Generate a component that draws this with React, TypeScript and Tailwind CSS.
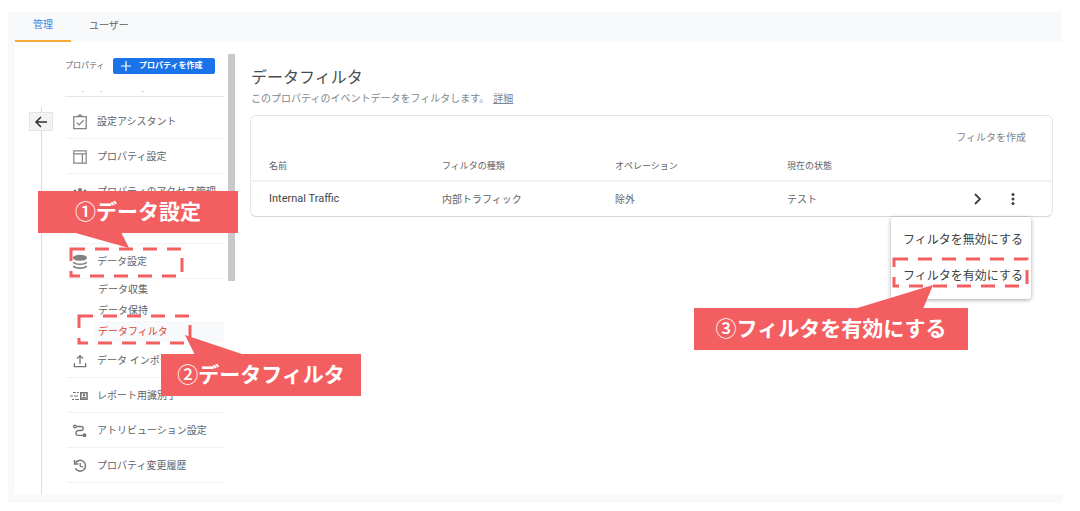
import type { ReactNode } from "react";

const items: { id: string; label?: string; icon?: ReactNode }[] = [
  {
    id: "assistant",
    label: "設定アシスタント",
    icon: (
      <svg viewBox="0 0 16 16" className="size-4" fill="none" stroke="#858585" strokeWidth="1.3">
        <path d="M1.8 2.6h12.4v12H1.800z" />
        <path d="M5.600 2.400 8 .8l2.400 1.600" />
        <path d="m4.800 8.600 2.300 2.300 4.500-4.600" />
      </svg>
    ),
  },
  {
    id: "property",
    label: "プロパティ設定",
    icon: (
      <svg viewBox="0 0 16 16" className="size-4" fill="none" stroke="#858585" strokeWidth="1.2">
        <path d="M1.800 1.800h12.400v12.400H1.800z" />
        <path d="M1.800 4.800h12.400M10.400 4.800v9.400" />
      </svg>
    ),
  },
  {
    id: "access",
    label: "プロパティのアクセス管理",
    icon: (
      <svg viewBox="0 0 16 16" className="size-4" fill="#757575">
        <circle cx="3" cy="7" r="1.6" />
        <circle cx="8" cy="6" r="2" />
        <circle cx="13" cy="7" r="1.6" />
        <path d="M0 12c0-3 6-3 6 0zM4.5 12c0-4 7-4 7 0zM10 12c0-3 6-3 6 0z" />
      </svg>
    ),
  },
  { id: "spacer" },
  {
    id: "data",
    label: "データ設定",
    icon: (
      <svg viewBox="0 0 16 16" className="size-4" fill="none" stroke="#808080" strokeWidth="1.7">
        <ellipse cx="8" cy="3.800" rx="6.200" ry="2.200" fill="#808080" />
        <path d="M1.400 8c1.400 3 11.800 3 13.200 0M1.400 11.800c1.400 3 11.800 3 13.200 0" />
      </svg>
    ),
  },
];

const subItems = [
  { label: "データ収集", active: false },
  { label: "データ保持", active: false },
  { label: "データフィルタ", active: true },
];

const lowerItems: { id: string; label: string; icon: ReactNode }[] = [
  {
    id: "import",
    label: "データ インポート",
    icon: (
      <svg viewBox="0 0 16 16" className="size-4" fill="none" stroke="#757575" strokeWidth="1.3">
        <path d="M8 11V3M5 5.600 8 2.600l3 3M2.400 10v3.600h11.200V10" />
      </svg>
    ),
  },
  {
    id: "identity",
    label: "レポート用識別子",
    icon: (
      <svg viewBox="0 0 18 10" className="h-[10px] w-[18px]" fill="none" stroke="#757575">
        <path d="M3 1.500h3M7 1.500h2M0 5h3M4 5h4M2 8.500h2M5 8.500h4" strokeWidth="1.200" />
        <path d="M10.800 1.800h6.200v6.400h-6.200z" strokeWidth="1.600" />
        <circle cx="13.900" cy="4" r="1.200" fill="#757575" stroke="none" />
        <path d="M11.800 7.500c0-2.400 4.200-2.400 4.200 0z" fill="#757575" stroke="none" />
      </svg>
    ),
  },
  {
    id: "attribution",
    label: "アトリビューション設定",
    icon: (
      <svg viewBox="0 0 16 16" className="size-4" fill="none" stroke="#757575" strokeWidth="1.300">
        <circle cx="3" cy="3.500" r="1.300" />
        <path d="M4.500 3.500h4.500c3 0 3 4 0 4H6.500c-3.400 0-3.400 4.800 0 4.800H11" />
        <circle cx="12.500" cy="12.300" r="1.300" fill="#757575" />
      </svg>
    ),
  },
  {
    id: "history",
    label: "プロパティ変更履歴",
    icon: (
      <svg viewBox="0 0 16 16" className="size-4" fill="none" stroke="#757575" strokeWidth="1.500">
        <path d="M3.600 4.800A5.400 5.400 0 1 1 3.400 10.400" />
        <path d="M2.600 2v4h4" />
        <path d="M8.200 5v3.400l3 .8" strokeWidth="1.200" />
      </svg>
    ),
  },
];

function NavRow({ label, icon }: { label?: string; icon?: ReactNode }) {
  return (
    <li className="h-[35px] border-b border-[#f1f2f3] pt-px">
      {label && (
        <a href="#" className="flex h-full items-center gap-[9px] text-[10px] whitespace-nowrap text-[#5f6368]">
          <span className="flex w-[21px] shrink-0 items-center justify-end">{icon}</span>
          {label}
        </a>
      )}
    </li>
  );
}

function DashedFrame({ className }: { className: string }) {
  return (
    <svg className={`pointer-events-none absolute overflow-visible ${className}`} aria-hidden="true">
      <rect width="100%" height="100%" fill="none" stroke="#f35f61" strokeWidth="3" strokeDasharray="14 10" />
    </svg>
  );
}

function Callout({
  step,
  children,
  className,
  tail,
}: {
  step: string;
  children: ReactNode;
  className: string;
  tail: ReactNode;
}) {
  return (
    <div
      className={`absolute flex h-[42px] items-center justify-center bg-[#f35f61] text-[21px] font-bold whitespace-nowrap text-white ${className}`}
    >
      {tail}
      <p className="relative">
        <span className="font-medium">{step}</span>
        {children}
      </p>
    </div>
  );
}

export default function App() {
  return (
    <div className="relative bg-white pt-3 pr-[18px] pb-2 pl-2 font-['Liberation_Sans','Noto_Sans_CJK_JP',sans-serif] text-[#5f6368]">
      <div className="bg-[#f7f9fb] pb-[9px] pl-[7px]">
        <nav className="flex h-[30px] text-[10px]">
          <a
            href="#"
            className="flex w-14 items-center justify-center border-b-2 border-[#f9ab3a] pb-1 text-[#4285e0]"
          >
            管理
          </a>
          <a href="#" className="flex items-center pb-1 pl-[18px] text-[#5f6368]">
            ユーザー
          </a>
        </nav>

        <div className="flex h-[452px] bg-white">
          <div className="flex w-[50px] flex-col pl-[14px]">
            <div className="relative mt-[65px] flex flex-1 flex-col">
              <span className="absolute top-0 bottom-0 left-3 w-px bg-[#dcdcdc]" />
              <button
                aria-label="戻る"
                className="relative mt-[5px] flex h-[19px] w-6 items-center justify-center border border-[#e4e4e4] bg-[#f3f3f3]"
              >
                <svg viewBox="0 0 14 12" className="h-3 w-[14px]" fill="none" stroke="#333" strokeWidth="1.500">
                  <path d="M13 6H2M7 1 2 6l5 5" />
                </svg>
              </button>
            </div>
          </div>

          <aside className="w-[159px]">
            <div className="flex h-[55px] flex-col justify-between border-b border-[#e3e4e5]">
              <div className="flex items-center gap-2 pt-4">
                <span className="w-10 text-[8px] leading-4 whitespace-nowrap">プロパティ</span>
                <button className="flex h-4 w-[102px] items-center gap-2 rounded-[2px] bg-[#1a73e8] pl-2 text-[8px] font-bold whitespace-nowrap text-white">
                  <svg viewBox="0 0 10 10" className="size-[10px] shrink-0" stroke="#fff" strokeWidth="1.200">
                    <path d="M5 0v10M0 5h10" />
                  </svg>
                  プロパティを作成
                </button>
              </div>
              <svg viewBox="0 0 159 3" className="mb-[3px] h-[3px] w-full" fill="#b5b5b5" aria-hidden="true">
                <circle cx="18" cy="1.500" r=".7" />
                <circle cx="36" cy="1.500" r=".7" />
                <circle cx="78" cy="1.500" r=".7" />
              </svg>
            </div>
            <ul className="pt-[7px] pl-[2px]">
              {items.map(({ id, label, icon }) => (
                <NavRow key={id} label={label} icon={icon} />
              ))}
            </ul>
            <ul className="pl-[29px] text-[10px]">
              {subItems.map((item) => (
                <li key={item.label}>
                  <a
                    href="#"
                    className={
                      item.active
                        ? "flex h-[21px] items-center bg-[#f8f9fa] pl-1 text-[#d8453e]"
                        : "flex h-[21px] items-center pl-1"
                    }
                  >
                    {item.label}
                  </a>
                </li>
              ))}
            </ul>
            <ul className="pt-px pl-[2px]">
              {lowerItems.map(({ id, label, icon }) => (
                <NavRow key={id} label={label} icon={icon} />
              ))}
            </ul>
          </aside>
          <div className="mt-3 ml-1 h-[227px] w-[7px] shrink-0 bg-[#c8c8c8]" />

          <main className="min-w-0 flex-1 pt-[26px] pr-[9px] pl-[15px]">
            <h1 className="pl-px text-base leading-5 text-[#4a4d51]">データフィルタ</h1>
            <p className="mt-[3px] pl-px text-[10px] leading-4 text-[#80868b]">
              このプロパティのイベントデータをフィルタします。
              <a href="#" className="ml-1 underline">
                詳細
              </a>
            </p>
            <section className="mt-2 rounded-md border border-[#e4e6e8] border-b-[#d5d8db]">
              <div className="flex h-[34px] items-end justify-end pr-[26px] pb-1">
                <button className="text-[10px] leading-4 text-[#80868b]">フィルタを作成</button>
              </div>
              <table className="w-full table-fixed text-left text-[10px]">
                <thead>
                  <tr className="h-[31px] border-b-2 border-[#f0f1f2] text-[9px]">
                    <th className="w-[191px] pt-[3px] pl-[18px] font-normal">名前</th>
                    <th className="w-[173px] pt-[3px] font-normal">フィルタの種類</th>
                    <th className="w-[172px] pt-[3px] font-normal">オペレーション</th>
                    <th className="pt-[3px] font-normal">現在の状態</th>
                    <th className="w-24" aria-label="操作" />
                  </tr>
                </thead>
                <tbody>
                  <tr className="h-[35px]">
                    <td className="pl-[18px] font-['Roboto'] text-[11px] text-[#44474a]">Internal Traffic</td>
                    <td>内部トラフィック</td>
                    <td>除外</td>
                    <td>テスト</td>
                    <td>
                      <div className="flex items-center gap-[25px] pl-[17px]">
                        <button aria-label="詳細を表示">
                          <svg viewBox="0 0 10 12" className="h-3 w-[10px]" fill="none" stroke="#3c4043" strokeWidth="1.800">
                            <path d="m2 1 5 5-5 5" />
                          </svg>
                        </button>
                        <button aria-label="その他">
                          <svg viewBox="0 0 10 12" className="h-3 w-[10px]" fill="#3c4043">
                            <circle cx="5" cy="1.500" r="1.500" />
                            <circle cx="5" cy="6" r="1.500" />
                            <circle cx="5" cy="10.500" r="1.500" />
                          </svg>
                        </button>
                      </div>
                    </td>
                  </tr>
                </tbody>
              </table>
            </section>
          </main>
        </div>
      </div>

      <div className="absolute top-[217px] right-[49px] flex w-[140px] flex-col rounded-[3px] bg-white pt-[5px] pb-[5px] text-xs text-[#3c4043] shadow-[0_1px_4px_rgba(0,0,0,0.35)]">
        <button className="h-9 pl-3 text-left whitespace-nowrap">フィルタを無効にする</button>
        <button className="h-9 pl-3 text-left whitespace-nowrap">フィルタを有効にする</button>
      </div>

      <DashedFrame className="top-[249px] left-[71px] h-[27px] w-[111px]" />
      <DashedFrame className="top-[316px] left-[79px] h-[27px] w-[111px]" />
      <DashedFrame className="top-[259px] right-[53px] h-[27px] w-[133px]" />

      <Callout
        step="①"
        className="top-[191px] left-[38px] w-[200px]"
        tail={
          <svg className="absolute top-[41px] left-[34px] h-4 w-[58px]" viewBox="0 0 58 16" fill="#f35f61">
            <path d="M0 0h49l8 16z" />
          </svg>
        }
      >
        データ設定
      </Callout>
      <Callout
        step="②"
        className="top-[354px] left-[161px] w-[200px]"
        tail={
          <svg className="absolute -top-[19px] left-[24px] h-5 w-[60px]" viewBox="0 0 60 20" fill="#f35f61">
            <path d="M0 0 60 20H10z" />
          </svg>
        }
      >
        データフィルタ
      </Callout>
      <Callout
        step="③"
        className="top-[308px] right-[112px] w-[274px]"
        tail={
          <svg className="absolute -top-[23px] right-[34px] h-6 w-[80px]" viewBox="0 0 80 24" fill="#f35f61">
            <path d="M79 0 0 24h69z" />
          </svg>
        }
      >
        フィルタを有効にする
      </Callout>
    </div>
  );
}
